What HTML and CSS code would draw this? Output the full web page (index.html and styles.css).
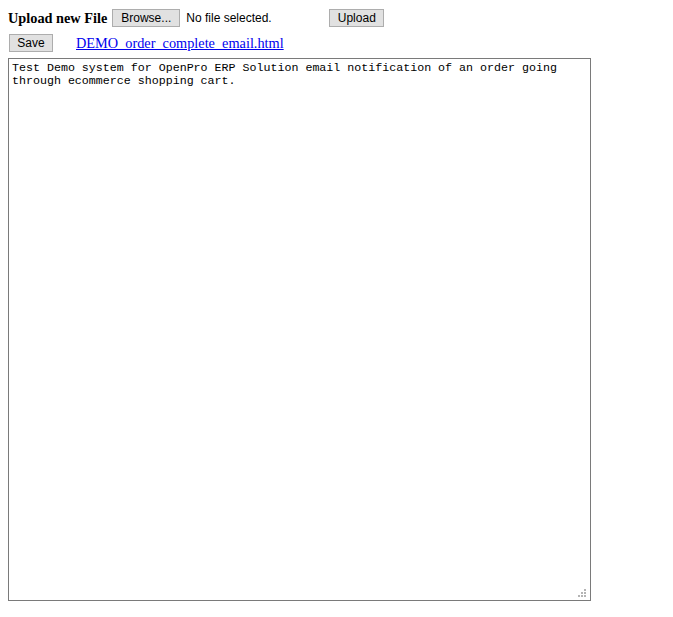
FILE: index.html
```html
<!DOCTYPE html>
<html>
<head>
<meta charset="utf-8">
<title>Upload new File</title>
<link rel="stylesheet" href="styles.css">
</head>
<body>
<form class="page">
  <div class="row row-upload">
    <b class="label">Upload new File</b>
    <button type="button" class="btn btn-browse">Browse...</button>
    <span class="file-name">No file selected.</span>
    <button type="button" class="btn btn-upload">Upload</button>
  </div>
  <div class="row row-save">
    <button type="button" class="btn btn-save">Save</button>
    <a class="file-link" href="#">DEMO_order_complete_email.html</a>
  </div>
  <div class="editor">
    <textarea class="editor-text" spellcheck="false">Test Demo system for OpenPro ERP Solution email notification of an order going through ecommerce shopping cart.</textarea>
    <svg class="grip" width="9" height="8" viewBox="0 0 9 8">
      <rect x="6" y="0" width="2" height="2"/>
      <rect x="3" y="3" width="2" height="2"/>
      <rect x="6" y="3" width="2" height="2"/>
      <rect x="0" y="6" width="2" height="2"/>
      <rect x="3" y="6" width="2" height="2"/>
      <rect x="6" y="6" width="2" height="2"/>
    </svg>
  </div>
</form>
</body>
</html>
```
FILE: styles.css
```css
html, body {
  margin: 0;
  padding: 0;
  background: #ffffff;
}
body {
  padding: 8px;
  font-family: "Liberation Serif", "Times New Roman", serif;
  font-size: 14.3px;
  color: #000;
}
.page {
  margin: 0;
  display: flex;
  flex-direction: column;
}
.row {
  display: flex;
  align-items: center;
  height: 20px;
}
.row-save {
  margin-top: 5px;
}
.label {
  font-weight: bold;
  margin-right: 5px;
}
.btn {
  box-sizing: border-box;
  height: 18px;
  padding: 0;
  margin: 0;
  border: 1px solid #adadad;
  background: #e1e1e1;
  color: #000;
  font-family: "Liberation Sans", Arial, sans-serif;
  font-size: 12px;
  line-height: 16px;
  text-align: center;
  border-radius: 0;
}
.btn-browse {
  width: 68px;
}
.file-name {
  font-family: "Liberation Sans", Arial, sans-serif;
  font-size: 12px;
  margin-left: 6px;
  width: 143px;
}
.btn-upload {
  width: 55px;
}
.btn-save {
  width: 44px;
  margin-left: 1px;
}
.file-link {
  margin-left: 23px;
  color: #0000ee;
  text-decoration: underline;
}
.editor {
  position: relative;
  width: 583px;
  height: 543px;
  margin-top: 5px;
}
.editor-text {
  box-sizing: border-box;
  display: block;
  width: 583px;
  height: 543px;
  margin: 0;
  padding: 2px 3px;
  border: 1px solid #7a7a7a;
  resize: none;
  outline: none;
  font-family: "Liberation Mono", "Courier New", monospace;
  font-size: 11.65px;
  line-height: 13px;
  color: #000;
  background: #fff;
}
.grip {
  position: absolute;
  right: 4px;
  bottom: 4px;
  fill: #b4b4b4;
}
```
